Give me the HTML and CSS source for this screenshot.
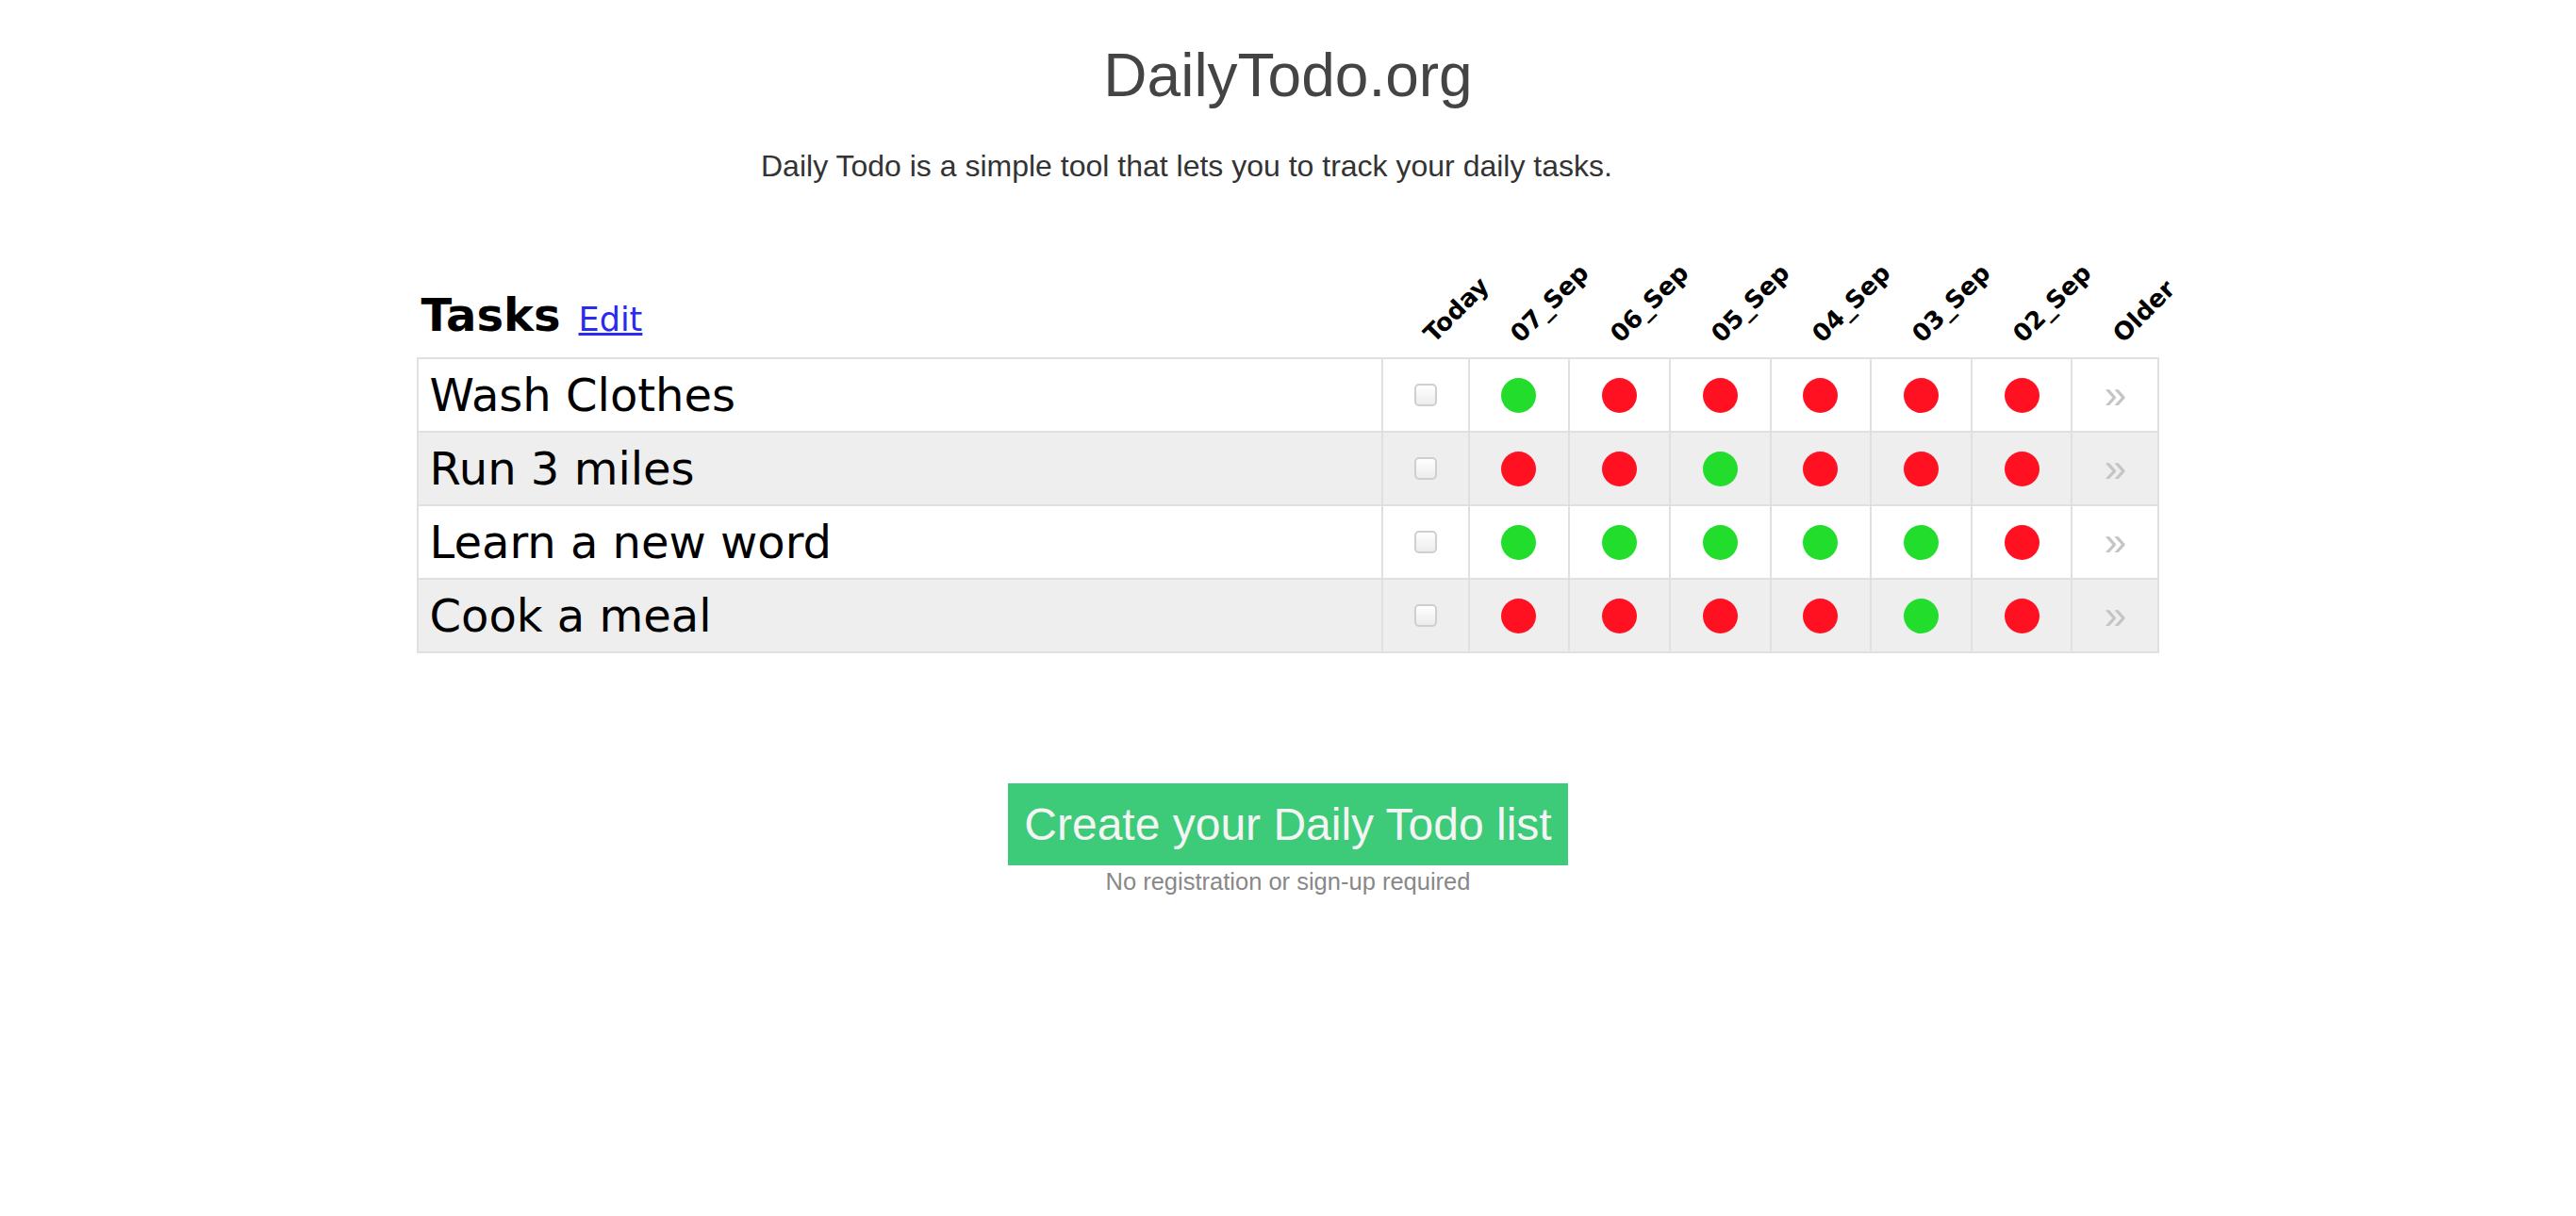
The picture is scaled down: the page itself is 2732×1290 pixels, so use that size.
FILE: index.html
```html
<!DOCTYPE html>
<html lang="en">
<head>
<meta charset="utf-8">
<title>DailyTodo.org</title>
<link rel="stylesheet" href="styles.css">
</head>
<body>
<h1 class="title">DailyTodo.org</h1>
<p class="intro">Daily Todo is a simple tool that lets you to track your daily tasks.</p>

<table class="tasks">
  <colgroup>
    <col class="c-name">
    <col class="c-today">
    <col class="c-day"><col class="c-day"><col class="c-day"><col class="c-day"><col class="c-day"><col class="c-day">
    <col class="c-older">
  </colgroup>
  <thead>
    <tr>
      <th class="head-name"><span class="tasks-title">Tasks</span><a href="#" class="edit">Edit</a></th>
      <th class="head-day"><span class="lbl">Today</span></th>
      <th class="head-day"><span class="lbl">07_Sep</span></th>
      <th class="head-day"><span class="lbl">06_Sep</span></th>
      <th class="head-day"><span class="lbl">05_Sep</span></th>
      <th class="head-day"><span class="lbl">04_Sep</span></th>
      <th class="head-day"><span class="lbl">03_Sep</span></th>
      <th class="head-day"><span class="lbl">02_Sep</span></th>
      <th class="head-day"><span class="lbl">Older</span></th>
    </tr>
  </thead>
  <tbody>
    <tr>
      <td class="name">Wash Clothes</td>
      <td class="cell"><span class="check"></span></td>
      <td class="cell"><span class="dot done"></span></td>
      <td class="cell"><span class="dot miss"></span></td>
      <td class="cell"><span class="dot miss"></span></td>
      <td class="cell"><span class="dot miss"></span></td>
      <td class="cell"><span class="dot miss"></span></td>
      <td class="cell"><span class="dot miss"></span></td>
      <td class="cell older">&raquo;</td>
    </tr>
    <tr>
      <td class="name">Run 3 miles</td>
      <td class="cell"><span class="check"></span></td>
      <td class="cell"><span class="dot miss"></span></td>
      <td class="cell"><span class="dot miss"></span></td>
      <td class="cell"><span class="dot done"></span></td>
      <td class="cell"><span class="dot miss"></span></td>
      <td class="cell"><span class="dot miss"></span></td>
      <td class="cell"><span class="dot miss"></span></td>
      <td class="cell older">&raquo;</td>
    </tr>
    <tr>
      <td class="name">Learn a new word</td>
      <td class="cell"><span class="check"></span></td>
      <td class="cell"><span class="dot done"></span></td>
      <td class="cell"><span class="dot done"></span></td>
      <td class="cell"><span class="dot done"></span></td>
      <td class="cell"><span class="dot done"></span></td>
      <td class="cell"><span class="dot done"></span></td>
      <td class="cell"><span class="dot miss"></span></td>
      <td class="cell older">&raquo;</td>
    </tr>
    <tr>
      <td class="name">Cook a meal</td>
      <td class="cell"><span class="check"></span></td>
      <td class="cell"><span class="dot miss"></span></td>
      <td class="cell"><span class="dot miss"></span></td>
      <td class="cell"><span class="dot miss"></span></td>
      <td class="cell"><span class="dot miss"></span></td>
      <td class="cell"><span class="dot done"></span></td>
      <td class="cell"><span class="dot miss"></span></td>
      <td class="cell older">&raquo;</td>
    </tr>
  </tbody>
</table>

<div class="cta">
  <a href="#" class="btn">Create your Daily Todo list</a>
  <div class="note">No registration or sign-up required</div>
</div>
</body>
</html>
```

FILE: styles.css
```css
html, body {
  margin: 0;
  padding: 0;
  background: #ffffff;
}

body {
  font-family: "Liberation Sans", Arial, sans-serif;
  color: #333333;
}

.title {
  margin: 43px 0 0;
  font-family: "Liberation Sans", Arial, sans-serif;
  font-weight: normal;
  font-size: 64px;
  line-height: 74px;
  color: #444444;
  text-align: center;
}

.intro {
  width: 1118px;
  margin: 41px auto 0;
  font-size: 32px;
  line-height: 37px;
  color: #333333;
}

.tasks {
  width: 1847px;
  margin: 78px auto 0;
  border-collapse: collapse;
  table-layout: fixed;
  font-family: "DejaVu Sans", Verdana, sans-serif;
}

.c-name { width: 1023px; }
.c-today { width: 92px; }
.c-day { width: 106.67px; }
.c-older { width: 92px; }

.tasks thead th {
  height: 88px;
  padding: 0;
  vertical-align: bottom;
  text-align: left;
  border: none;
}

.head-name {
  padding: 0 0 18px 4px !important;
  color: #000000;
  white-space: nowrap;
}

.tasks-title {
  font-size: 48px;
  font-weight: bold;
  line-height: 54px;
}

.edit {
  margin-left: 19px;
  font-size: 35px;
  font-weight: normal;
  color: #2a2af0;
  text-decoration: underline;
}

.head-day {
  padding: 0 0 10px 59px !important;
  white-space: nowrap;
}

.lbl {
  display: inline-block;
  font-size: 26px;
  font-weight: bold;
  line-height: 30px;
  color: #000000;
  transform-origin: 0 100%;
  transform: rotate(-45deg);
}

.tasks tbody tr:nth-child(odd) { background: #ffffff; }
.tasks tbody tr:nth-child(even) { background: #eeeeee; }

.tasks td {
  border: 2px solid #e0e0e0;
  padding: 10px 12px;
  height: 56px;
}

.name {
  font-size: 48px;
  line-height: 56px;
  color: #000000;
  white-space: nowrap;
}

.cell {
  text-align: center;
  vertical-align: middle;
  padding: 0 !important;
}

.check {
  display: inline-block;
  width: 20px;
  height: 20px;
  border: 2px solid #cfcfcf;
  border-radius: 5px;
  background: linear-gradient(#ffffff, #ececec);
  vertical-align: middle;
}

.dot {
  display: inline-block;
  width: 37px;
  height: 37px;
  border-radius: 50%;
  vertical-align: middle;
}

.dot.done { background: #22dd2c; }
.dot.miss { background: #ff1121; }

.older {
  font-family: "Liberation Sans", Arial, sans-serif;
  font-size: 42px;
  color: #c4c4c4;
}

.cta {
  margin-top: 138px;
  text-align: center;
}

.btn {
  display: inline-block;
  padding: 16px 17px;
  background: #3dcb79;
  color: #f4f4f4;
  font-size: 48px;
  line-height: 55px;
  text-decoration: none;
}

.note {
  margin-top: 2px;
  font-size: 25.5px;
  line-height: 30px;
  color: #888888;
}
```
